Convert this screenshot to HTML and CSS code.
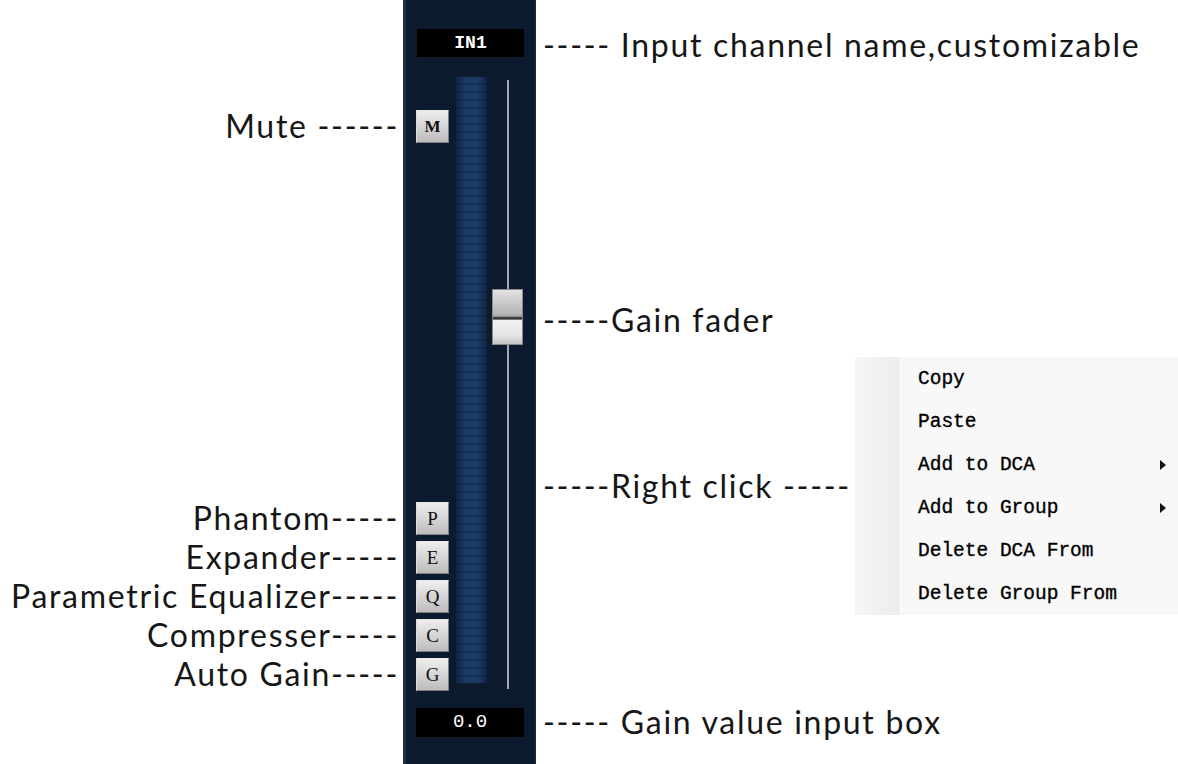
FILE: index.html
```html
<!DOCTYPE html>
<html>

<head>
  <title>Input Channel</title>
  <link rel="stylesheet" href="styles.css">
</head>

<body>

  <main class="sheet">

    <section class="notes notes-left">
      <p class="note">Mute ------</p>
      <div class="note-group">
        <p class="note">Phantom-----</p>
        <p class="note">Expander-----</p>
        <p class="note">Parametric Equalizer-----</p>
        <p class="note">Compresser-----</p>
        <p class="note">Auto Gain-----</p>
      </div>
    </section>

    <section class="strip">
      <div class="name-box">IN1</div>
      <div class="strip-body">
        <div class="keys">
          <div class="key key-mute">M</div>
          <div class="key-group">
            <div class="key">P</div>
            <div class="key">E</div>
            <div class="key">Q</div>
            <div class="key">C</div>
            <div class="key">G</div>
          </div>
        </div>
        <div class="meter"></div>
        <div class="fader">
          <div class="knob"></div>
        </div>
      </div>
      <div class="gain-box">0.0</div>
    </section>

    <section class="notes notes-right">
      <p class="note note-name">----- Input channel name,customizable</p>
      <p class="note note-fader">-----Gain fader</p>
      <div class="menu-row">
        <p class="note">-----Right click -----</p>
        <ul class="menu">
          <li>Copy</li>
          <li>Paste</li>
          <li>Add to DCA <span class="arrow"></span></li>
          <li>Add to Group <span class="arrow"></span></li>
          <li>Delete DCA From</li>
          <li>Delete Group From</li>
        </ul>
      </div>
      <p class="note note-gain">----- Gain value input box</p>
    </section>

  </main>

</body>

</html>
```

FILE: styles.css
```css
body {
  margin: 0;
  height: 764px;
  overflow: hidden;
  background: white;
  font-family: Lato, "Open Sans", sans-serif;
  color: #161616;
}

.sheet {
  display: flex;
  height: 764px;
}

p {
  margin: 0;
}

/* annotations */

.notes {
  display: flex;
  flex-direction: column;
}

.note {
  height: 34px;
  line-height: 34px;
  font-size: 32px;
  letter-spacing: 1.7px;
  white-space: nowrap;
}

.notes-left {
  width: 403px;
  box-sizing: border-box;
  padding: 109px 4px 0 0;
  align-items: flex-end;
}

.note-group {
  display: flex;
  flex-direction: column;
  align-items: flex-end;
  gap: 5px;
  margin-top: 358px;
}

.notes-right {
  flex: 1;
  padding-left: 7px;
}

.note-name {
  margin-top: 28px;
}

.note-fader {
  margin-top: 241px;
}

.menu-row {
  display: flex;
  align-items: center;
  margin-top: 20px;
}

.note-gain {
  margin-top: 90px;
}

/* context menu */

.menu {
  margin: 0 0 0 auto;
  padding: 0;
  list-style: none;
  width: 323px;
  background: linear-gradient(to right, #f6f6f6, #ececec 44px, #f8f8f8 45px);
  font-family: "Liberation Mono", monospace;
  font-size: 19.5px;
  color: #000;
  -webkit-text-stroke: 0.35px #000;
}

.menu li {
  display: flex;
  align-items: center;
  justify-content: space-between;
  height: 43px;
  padding: 0 12px 0 63px;
}

.arrow {
  width: 0;
  height: 0;
  border-left: 6px solid #111;
  border-top: 5px solid transparent;
  border-bottom: 5px solid transparent;
}

/* channel strip */

.strip {
  width: 133px;
  box-sizing: border-box;
  padding: 29px 12px 0 13px;
  background: #0c1a2d;
  box-shadow: inset 3px 0 0 #1d2e45, inset -2px 0 0 #14243a;
  display: flex;
  flex-direction: column;
}

.name-box {
  height: 28px;
  margin-left: 1px;
  background: black;
  color: white;
  font-family: "Liberation Mono", monospace;
  font-weight: bold;
  font-size: 18px;
  line-height: 28px;
  text-align: center;
}

.strip-body {
  display: flex;
  height: 614px;
  margin-top: 20px;
}

.keys {
  display: flex;
  flex-direction: column;
  justify-content: space-between;
  width: 33px;
  padding-top: 33px;
}

.key-group {
  display: flex;
  flex-direction: column;
  gap: 6px;
}

.key {
  height: 33px;
  box-sizing: border-box;
  border: 1px solid #7d7d7d;
  border-top-color: #e8e8e8;
  border-left-color: #dcdcdc;
  background: linear-gradient(to bottom, #eeeeee, #bcbcbc);
  color: #111;
  font-family: "Liberation Serif", serif;
  font-size: 19px;
  line-height: 31px;
  text-align: center;
}

.key-mute {
  font-weight: bold;
  font-size: 17px;
}

.meter {
  width: 31px;
  height: 606px;
  margin-left: 7px;
  background:
    linear-gradient(to right, rgba(8, 18, 34, 0.55), rgba(8, 18, 34, 0) 30%, rgba(8, 18, 34, 0) 70%, rgba(8, 18, 34, 0.55)),
    repeating-linear-gradient(to bottom, #1b3a66 0 6px, #14305a 6px 8px);
}

.fader {
  width: 31px;
  margin: 3px 0 2px 5px;
  background: linear-gradient(to right, transparent 15px, #a4a9b0 15px 17px, transparent 17px);
}

.knob {
  height: 56px;
  margin-top: 209px;
  box-sizing: border-box;
  border: 1px solid #8a8a8a;
  background: linear-gradient(to bottom, #e2e2e2, #b4b4b4 45%, #9c9c9c 49%, #3a3a3a 50%, #3a3a3a 54%, #f2f2f2 56%, #e4e4e4 85%, #c2c2c2);
}

.gain-box {
  height: 29px;
  margin-top: 17px;
  background: black;
  color: white;
  font-family: "Liberation Mono", monospace;
  font-size: 19px;
  line-height: 29px;
  text-align: center;
}
```
